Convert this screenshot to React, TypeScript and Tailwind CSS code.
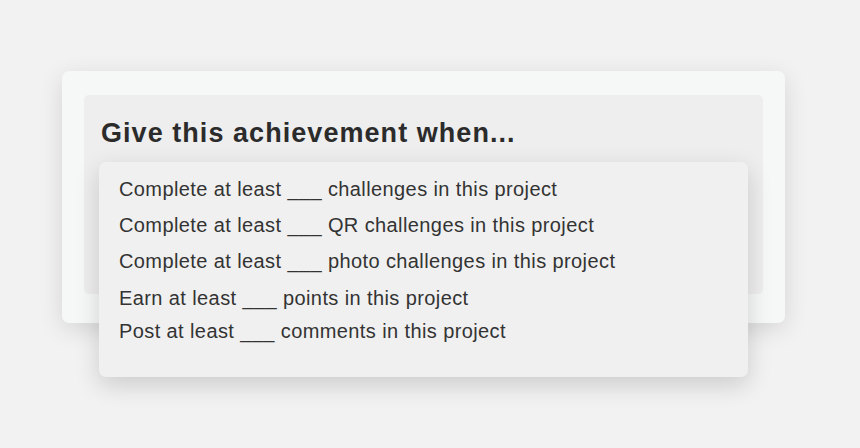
const options = [
  "Complete at least ___ challenges in this project",
  "Complete at least ___ QR challenges in this project",
  "Complete at least ___ photo challenges in this project",
  "Earn at least ___ points in this project",
  "Post at least ___ comments in this project",
];

export default function App() {
  return (
    <div
      className="w-[860px] h-[448px] bg-[#f2f2f2] overflow-hidden pt-[71px] pl-[62px]"
      style={{ fontFamily: '"Liberation Sans", Arial, sans-serif' }}
    >
      <div className="w-[723px] h-[252px] bg-[#f6f7f7] rounded-[7px] shadow-[0_6px_24px_rgba(0,0,0,0.12)] pt-[24px] pl-[22px]">
        <div className="relative w-[679px] h-[199px] bg-[#eeeeee] rounded-[5px] pl-[17px] pt-[22px]">
          <h1 className="text-[27px] font-bold text-[#2b2b2b] leading-[32px] tracking-[1.05px]">
            Give this achievement when...
          </h1>
          <ul className="absolute left-[15px] top-[67px] w-[649px] h-[215px] bg-[#f0f0f0] rounded-[7px] shadow-[0_8px_24px_rgba(0,0,0,0.16)] pt-[14px] pl-[20px] flex flex-col">
            {options.map((o, i) => (
              <li
                key={o}
                className={`text-[20px] text-[#333333] leading-[26px] tracking-[0.4px] ${i === 3 ? "mt-[11px]" : i === 4 ? "mt-[7px]" : i > 0 ? "mt-[10px]" : ""}`}
              >
                {o}
              </li>
            ))}
          </ul>
        </div>
      </div>
    </div>
  );
}
